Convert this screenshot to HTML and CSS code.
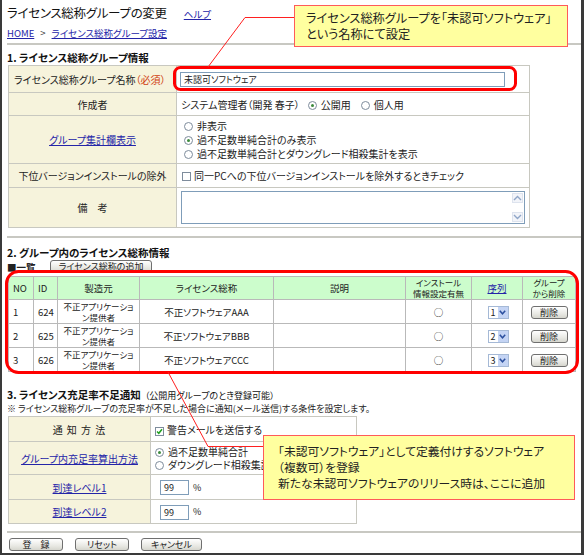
FILE: index.html
```html
<!DOCTYPE html>
<html lang="ja">
<head>
<meta charset="utf-8">
<title>ライセンス総称グループの変更</title>
<link rel="stylesheet" href="styles.css">
</head>
<body>
<div class="frame">
  <div class="page">
    <div class="title-row">
      <h1 class="title">ライセンス総称グループの変更</h1>
      <a class="link help" href="#">ヘルプ</a>
    </div>
    <div class="crumb"><a class="link" href="#">HOME</a><span class="sep">&gt;</span><a class="link" href="#">ライセンス総称グループ設定</a></div>
    <div class="rule"></div>

    <h2 class="sec s1">1. ライセンス総称グループ情報</h2>
    <table class="form info">
      <colgroup><col class="c-lab1"><col></colgroup>
      <tr class="r-name">
        <th class="lab left">ライセンス総称グループ名称<span class="req">（必須）</span></th>
        <td class="val"><span class="textbox tb-name">未認可ソフトウェア</span></td>
      </tr>
      <tr class="r-author">
        <th class="lab">作成者</th>
        <td class="val">システム管理者（開発 春子）<span class="opt first"><span class="radio on"></span>公開用</span><span class="opt"><span class="radio"></span>個人用</span></td>
      </tr>
      <tr class="r-agg">
        <th class="lab"><a class="link" href="#">グループ集計欄表示</a></th>
        <td class="val">
          <div class="opt-line"><span class="radio"></span>非表示</div>
          <div class="opt-line"><span class="radio on"></span>過不足数単純合計のみ表示</div>
          <div class="opt-line"><span class="radio"></span>過不足数単純合計とダウングレード相殺集計を表示</div>
        </td>
      </tr>
      <tr class="r-excl">
        <th class="lab">下位バージョンインストールの除外</th>
        <td class="val"><span class="check"></span>同一PCへの下位バージョンインストールを除外するときチェック</td>
      </tr>
      <tr class="r-memo">
        <th class="lab">備　考</th>
        <td class="val">
          <div class="textarea">
            <div class="sb">
              <span class="sb-btn"><svg width="9" height="6" viewBox="0 0 9 6"><path d="M1 5 L4.5 1.5 L8 5" fill="none" stroke="#8fa6c8" stroke-width="1.4"/></svg></span>
              <span class="sb-btn"><svg width="9" height="6" viewBox="0 0 9 6"><path d="M1 1 L4.5 4.5 L8 1" fill="none" stroke="#8fa6c8" stroke-width="1.4"/></svg></span>
            </div>
          </div>
        </td>
      </tr>
    </table>
    <div class="rule r2"></div>

    <h2 class="sec s2">2. グループ内のライセンス総称情報</h2>
    <div class="listbar"><span class="list-label">■一覧</span><button class="btn add">ライセンス総称の追加</button></div>
    <table class="list">
      <colgroup>
        <col class="w-no"><col class="w-id"><col class="w-mk"><col class="w-nm"><col class="w-ds"><col class="w-in"><col class="w-od"><col class="w-dl">
      </colgroup>
      <tr class="head">
        <th class="l">NO</th><th class="l">ID</th><th>製造元</th><th>ライセンス総称</th><th>説明</th>
        <th class="small">インストール<br>情報設定有無</th><th><a class="link" href="#">序列</a></th><th class="small">グループ<br>から削除</th>
      </tr>
      <tr>
        <td class="l">1</td><td class="l">624</td><td class="mk">不正アプリケーショ<br>ン提供者</td><td>不正ソフトウェアAAA</td><td></td><td>○</td>
        <td><span class="select"><span class="sel-v">1</span><span class="sel-a"><svg width="7" height="5" viewBox="0 0 7 5"><path d="M0.8 0.8 L3.5 3.8 L6.2 0.8" fill="none" stroke="#2b4f9e" stroke-width="1.5"/></svg></span></span></td>
        <td><button class="btn del">削除</button></td>
      </tr>
      <tr>
        <td class="l">2</td><td class="l">625</td><td class="mk">不正アプリケーショ<br>ン提供者</td><td>不正ソフトウェアBBB</td><td></td><td>○</td>
        <td><span class="select"><span class="sel-v">2</span><span class="sel-a"><svg width="7" height="5" viewBox="0 0 7 5"><path d="M0.8 0.8 L3.5 3.8 L6.2 0.8" fill="none" stroke="#2b4f9e" stroke-width="1.5"/></svg></span></span></td>
        <td><button class="btn del">削除</button></td>
      </tr>
      <tr>
        <td class="l">3</td><td class="l">626</td><td class="mk">不正アプリケーショ<br>ン提供者</td><td>不正ソフトウェアCCC</td><td></td><td>○</td>
        <td><span class="select"><span class="sel-v">3</span><span class="sel-a"><svg width="7" height="5" viewBox="0 0 7 5"><path d="M0.8 0.8 L3.5 3.8 L6.2 0.8" fill="none" stroke="#2b4f9e" stroke-width="1.5"/></svg></span></span></td>
        <td><button class="btn del">削除</button></td>
      </tr>
    </table>

    <h2 class="sec s3">3. ライセンス充足率不足通知<span class="sub">（公開用グループのとき登録可能）</span></h2>
    <p class="note">※ ライセンス総称グループの充足率が不足した場合に通知(メール送信)する条件を設定します。</p>
    <table class="form notify">
      <colgroup><col class="c-lab3"><col></colgroup>
      <tr class="n1">
        <th class="lab spaced">通 知 方 法</th>
        <td class="val v3"><span class="check on"><svg width="7" height="7" viewBox="0 0 7 7"><path d="M1 3.5 L2.8 5.3 L6 1.2" fill="none" stroke="#21a121" stroke-width="1.5"/></svg></span>警告メールを送信する</td>
      </tr>
      <tr class="n2">
        <th class="lab"><a class="link" href="#">グループ内充足率算出方法</a></th>
        <td class="val v3">
          <div class="opt-line"><span class="radio on"></span>過不足数単純合計</div>
          <div class="opt-line"><span class="radio"></span>ダウングレード相殺集計</div>
        </td>
      </tr>
      <tr class="n3">
        <th class="lab"><a class="link" href="#">到達レベル1</a></th>
        <td class="val v3"><span class="textbox tb-lv">99</span><span class="pct">%</span></td>
      </tr>
      <tr class="n4">
        <th class="lab"><a class="link" href="#">到達レベル2</a></th>
        <td class="val v3"><span class="textbox tb-lv">99</span><span class="pct">%</span></td>
      </tr>
    </table>
    <div class="rule r3"></div>
    <div class="actions">
      <button class="btn act">登　録</button>
      <button class="btn act">リセット</button>
      <button class="btn act">キャンセル</button>
    </div>
  </div>

  <svg class="marks" width="584" height="555" viewBox="0 0 584 555">
    <rect x="174.5" y="67.5" width="341" height="22" rx="6" ry="6" fill="none" stroke="#ff0000" stroke-width="3"/>
    <rect x="6.5" y="271.5" width="571" height="101" rx="12" ry="12" fill="none" stroke="#ff0000" stroke-width="3"/>
    <polyline points="294,17.5 245,17.5 208,67" fill="none" stroke="#ff2020" stroke-width="1"/>
    <polyline points="168,372 208,446.5 263,446.5" fill="none" stroke="#ff2020" stroke-width="1"/>
  </svg>
  <div class="callout c1">ライセンス総称グループを「未認可ソフトウェア」<br>という名称にて設定</div>
  <div class="callout c2">「未認可ソフトウェア」として定義付けするソフトウェア<br>（複数可）を登録<br>新たな未認可ソフトウェアのリリース時は、ここに追加</div>
</div>
</body>
</html>
```

FILE: styles.css
```css
* { box-sizing: border-box; }
html, body { margin: 0; padding: 0; background: #fff; }
body {
  font-family: "Noto Sans CJK JP", "Noto Sans", sans-serif;
  font-size: 10px;
  color: #222;
  font-feature-settings: "palt";
}
.frame {
  position: relative;
  width: 584px;
  height: 555px;
  border-left: 2px solid #3a3a3a;
  border-right: 3px solid #3a3a3a;
  border-bottom: 2px solid #3a3a3a;
  overflow: hidden;
  background: #fff;
}
.page { padding-left: 5px; }
.link { color: #2424a8; text-decoration: underline; }

.title-row { display: flex; align-items: baseline; margin-top: 4px; height: 18px; }
.title { margin: 0; font-size: 12.5px; font-weight: normal; line-height: 18px; color: #111; letter-spacing: -0.3px; }
.help { font-size: 9.5px; margin-left: 17px; }
.crumb { margin-top: 4px; height: 14px; line-height: 14px; font-size: 9.5px; }
.crumb .sep { margin: 0 6px; color: #444; }
.rule { margin-top: 3px; height: 2px; background: #c8c8c2; }
.rule.r2 { margin-top: 8px; }
.rule.r3 { margin-top: 7px; }

.sec { margin: 6px 0 0; font-size: 10.5px; font-weight: bold; line-height: 14px; height: 14px; color: #111; }
.sec.s2 { margin-top: 8px; }
.sec.s3 { margin-top: 16px; }
.sec .sub { font-weight: normal; font-size: 9px; margin-left: 4px; }
.note { margin: 0; height: 14px; line-height: 14px; font-size: 9px; }

table { border-collapse: collapse; table-layout: fixed; }
.form { margin-left: 1px; border: 1px solid #c4c4bc; }
.form th, .form td { border: 1px solid #c8c8c0; padding: 0; }
.form .lab { background: #f6f3dc; font-weight: normal; text-align: center; color: #222; }
.form .lab.left { text-align: left; padding-left: 5px; }
.form .req { color: #d04010; }
.form .val { padding-left: 4px; text-align: left; }
.info { width: 522px; }
.c-lab1 { width: 168px; }
.r-name { height: 27px; }
.r-author { height: 23px; }
.r-agg { height: 48px; }
.r-excl { height: 24px; }
.r-memo { height: 40px; }

.textbox {
  display: inline-flex; align-items: center;
  border: 1px solid #7f9db9; background: #fff;
  font-size: 9px; padding-left: 3px; vertical-align: middle;
}
.tb-name { width: 325px; height: 15px; margin-left: -1px; }
.tb-lv { width: 29px; height: 15px; margin-left: 5px; }
.pct { margin-left: 4px; font-size: 9px; }

.radio {
  display: inline-block; width: 9px; height: 9px; border-radius: 50%;
  border: 1px solid #7e8c9c; background: #fff; vertical-align: -1px;
  margin-right: 4px; position: relative;
}
.radio.on::after {
  content: ""; position: absolute; left: 2px; top: 2px; width: 3px; height: 3px;
  border-radius: 50%; background: #3d8a3d;
}
.check {
  display: inline-flex; align-items: center; justify-content: center;
  width: 9px; height: 9px; border: 1px solid #7e8c9c; background: #fff;
  vertical-align: -1px; margin-right: 3px;
}
.opt.first { margin-left: 8px; }
.opt { margin-left: 10px; }
.opt-line { height: 14px; line-height: 14px; padding-left: 3px; }
.r-excl .val { padding-left: 5px; }

.textarea {
  width: 344px; height: 33px; border: 1px solid #7f9db9; background: #fff;
  display: flex; justify-content: flex-end;
}
.sb { width: 13px; display: flex; flex-direction: column; justify-content: space-between; padding: 1px; }
.sb-btn { display: flex; align-items: center; justify-content: center; height: 10px; background: #f2f4f9; border: 1px solid #dde3ee; }

.listbar { display: flex; align-items: center; height: 14px; line-height: 14px; }
.list-label { font-size: 9.5px; font-weight: bold; width: 43px; }
.btn {
  font-family: inherit; font-feature-settings: "palt"; font-size: 9px; color: #222;
  border: 1px solid #6f6f6f; border-radius: 3px;
  background: linear-gradient(#ffffff, #e9e9e4 60%, #d6d6ce);
  padding: 0; line-height: 11px; display: inline-flex; align-items: center; justify-content: center;
}
.btn.add { width: 102px; height: 13px; margin-top: -2px; }

.list { margin-top: 2px; margin-left: 1px; width: 567px; }
.w-no { width: 25px; } .w-id { width: 24px; } .w-mk { width: 82px; } .w-nm { width: 134px; }
.w-ds { width: 132px; } .w-in { width: 66px; } .w-od { width: 51px; } .w-dl { width: 53px; }
.list th, .list td { border: 1px solid #b9b9b9; padding: 0; text-align: center; font-size: 9.5px; }
.list th { background: #ccfdcc; font-weight: normal; height: 23px; }
.list td { height: 24px; }
.list .l { text-align: left; padding-left: 4px; }
.list .small { font-size: 8.5px; line-height: 11px; }
.list .mk { font-size: 8.5px; line-height: 11px; }
.select { display: inline-flex; align-items: stretch; width: 21px; height: 13px; border: 1px solid #a5b9d6; background: #fff; vertical-align: middle; margin-left: 2px; }
.sel-v { flex: 1; font-size: 9px; line-height: 11px; text-align: left; padding-left: 2px; }
.sel-a { width: 10px; display: flex; align-items: center; justify-content: center; background: #c4d4f4; }
.btn.del { width: 37px; height: 13px; }

.notify { width: 349px; }
.c-lab3 { width: 142px; }
.n1 { height: 25px; } .n2 { height: 33px; } .n3 { height: 25px; } .n4 { height: 24px; }
.v3 { padding-left: 6px; }
.v3 .opt-line { padding-left: 0; height: 13px; line-height: 13px; }
.spaced { letter-spacing: 1px; }

.actions { display: flex; margin-top: 5px; margin-left: 2px; gap: 12px; }
.btn.act { width: 54px; height: 13px; }
.btn.act:last-child { width: 61px; }

.marks { position: absolute; left: -2px; top: 0; pointer-events: none; }
.callout {
  position: absolute; background: #ffff9f; border: 1px solid #ff5a5a;
  color: #222; line-height: 14px;
}
.c1 { left: 292px; top: 5px; width: 274px; height: 42px; padding: 5px 0 0 11px; font-size: 12.2px; line-height: 15.5px; }
.c2 { left: 261px; top: 435px; width: 312px; height: 65px; padding: 7px 0 0 14px; line-height: 16px; font-size: 11.8px; }
```
